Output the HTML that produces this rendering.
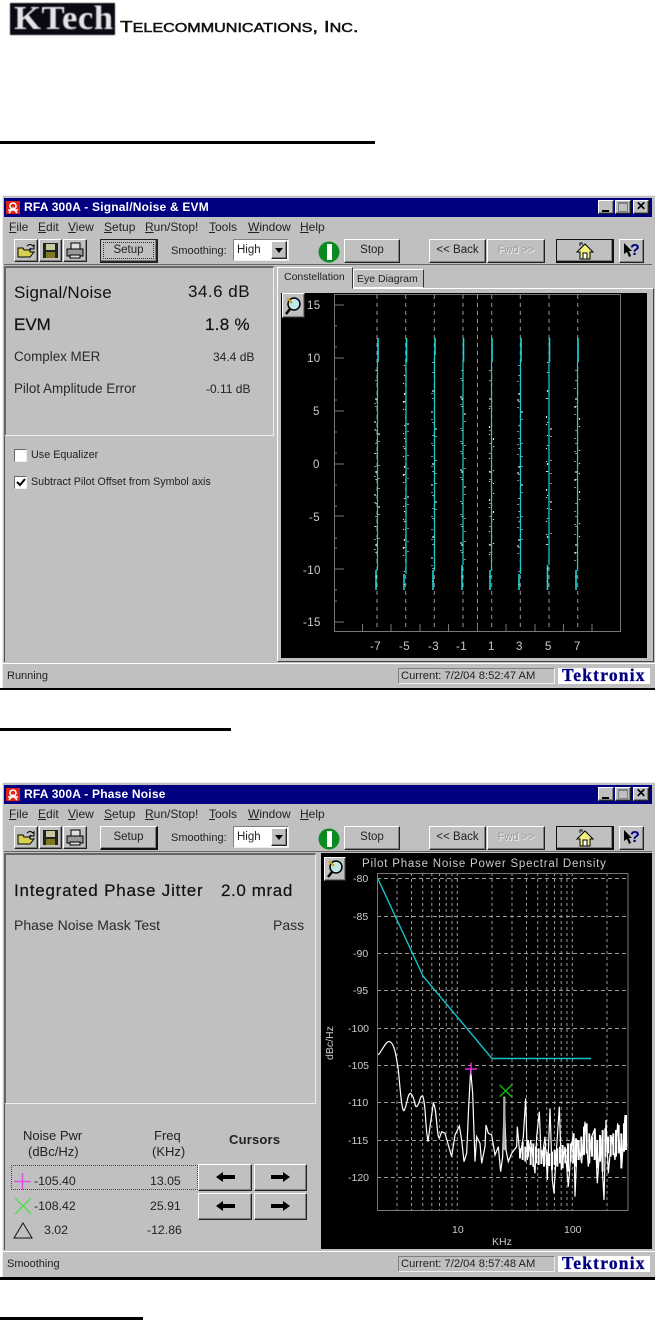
<!DOCTYPE html>
<html><head><meta charset="utf-8"><style>
html,body{margin:0;padding:0;background:#fff}
body{position:relative;width:655px;height:1320px;overflow:hidden;font-family:"Liberation Sans",sans-serif}
.a,.t,.b{position:absolute}
.t{white-space:nowrap;color:#222;font-size:11px;line-height:14px}
.b{box-sizing:border-box;background:#c0c0c0;border:1px solid;border-color:#fff #222 #222 #fff;box-shadow:inset -1px -1px 0 #808080}
.c{text-align:center;color:#222;font-size:11px;line-height:20px;white-space:nowrap}
.title{position:absolute;left:4px;width:648px;height:19px;background:#000080}
.title .t{color:#fff;font-weight:bold;font-size:12px;line-height:19px;left:20px;top:0;letter-spacing:.2px}
.u{text-decoration:underline}
.sunk{position:absolute;box-sizing:border-box;background:#c0c0c0;border:1px solid;border-color:#808080 #fff #fff #808080}
.big{font-size:17px;line-height:20px;color:#111}
.mid{font-size:13.4px;line-height:16px;color:#2a2a2a}
.tk{font:bold 17.5px/15px "Liberation Serif",serif;color:#000080;letter-spacing:1.2px;-webkit-text-stroke:.3px #000080}
svg{position:absolute;overflow:visible}
svg text{font-family:"Liberation Sans",sans-serif}
.plot{filter:blur(.3px)}
</style></head><body>

<!-- Logo -->
<div class="a" style="left:10px;top:3px;width:105px;height:32px;background:#0a0a14;overflow:hidden;filter:blur(.4px)">
<div class="t" style="left:4px;top:1px;font:bold 34px/30px 'Liberation Serif',serif;color:#e4e4e8;letter-spacing:.5px;transform-origin:0 0;transform:scaleX(1.02)">KTech</div></div>
<div class="t" style="left:120px;top:20px;font-size:16px;line-height:16px;color:#111;-webkit-text-stroke:.45px #111;transform-origin:0 0;transform:scaleX(1.29);filter:blur(.3px)">T<span style="font-size:12.5px">ELECOMMUNICATIONS</span>, I<span style="font-size:12.5px">NC</span>.</div>

<div class="a" style="left:0;top:141px;width:375px;height:3px;background:#000"></div>

<!-- WINDOW 1 -->
<div class="a" style="left:0;top:195px;width:655px;height:495px;filter:blur(.25px)">
<div class="a" style="left:2px;top:0;width:653px;height:493px;background:#c0c0c0;border-top:1px solid #eee;border-left:1px solid #eee;box-sizing:border-box"></div>
<div class="a" style="left:0;top:493px;width:655px;height:2px;background:#000"></div>
<div class="title" style="top:3px"><div class="a" style="left:2px;top:3px;width:14px;height:13px;background:#e02010"><svg width="14" height="13"><path d="M7 2a3 3 0 1 1-.01 0M3 12l4-5 4 5M2 9h10" fill="none" stroke="#fff" stroke-width="1.500"/></svg></div><div class="t">RFA 300A - Signal/Noise &amp; EVM</div></div>
<div class="b" style="left:598px;top:5px;width:16px;height:14px"><div class="a" style="left:3px;top:9px;width:7px;height:2px;background:#000"></div></div>
<div class="b" style="left:615px;top:5px;width:16px;height:14px"><div class="a" style="left:2px;top:1px;width:10px;height:10px;box-sizing:border-box;border:1px solid #808080;border-top-width:2px"></div></div>
<div class="b" style="left:633px;top:5px;width:16px;height:14px"><div class="c" style="line-height:11px;font-weight:bold;font-size:12px;color:#000">✕</div></div>
<div class="t" style="left:9px;top:25px;font-size:12px"><span class="u">F</span>ile</div>
<div class="t" style="left:38px;top:25px;font-size:12px"><span class="u">E</span>dit</div>
<div class="t" style="left:68px;top:25px;font-size:12px"><span class="u">V</span>iew</div>
<div class="t" style="left:104px;top:25px;font-size:12px"><span class="u">S</span>etup</div>
<div class="t" style="left:145px;top:25px;font-size:12px"><span class="u">R</span>un/Stop!</div>
<div class="t" style="left:209px;top:25px;font-size:12px"><span class="u">T</span>ools</div>
<div class="t" style="left:248px;top:25px;font-size:12px"><span class="u">W</span>indow</div>
<div class="t" style="left:300px;top:25px;font-size:12px"><span class="u">H</span>elp</div>
<div class="b" style="left:14px;top:44px;width:24px;height:23px"><svg width="22" height="21" viewBox="0 0 22 21"><path d="M3 17V8h5l1 2h6v2h4l-4 5H3z" fill="#d8d050" stroke="#000"/><path d="M12 6q3-3 6 0l1-1v4h-4l1-1" fill="none" stroke="#000"/></svg></div>
<div class="b" style="left:39px;top:44px;width:23px;height:23px"><svg width="21" height="21" viewBox="0 0 21 21"><rect x="3" y="3" width="15" height="15" fill="#222"/><rect x="6" y="4" width="9" height="6" fill="#c8c8a0"/><rect x="6" y="12" width="9" height="6" fill="#807820"/></svg></div>
<div class="b" style="left:63px;top:44px;width:24px;height:23px"><svg width="22" height="21" viewBox="0 0 22 21"><path d="M7 3h9v6H7z" fill="#ddd" stroke="#000"/><path d="M3 9h16v7H3z" fill="#999" stroke="#000"/><path d="M6 15h10v3H6z" fill="#ddd" stroke="#000"/></svg></div>
<div class="b" style="left:100px;top:44px;width:58px;height:24px;border-color:#222;border-width:1px 2px 2px 1px"><div class="a" style="left:2px;top:2px;right:2px;bottom:2px;border:1px dotted #333"></div><div class="c" style="line-height:20px;font-size:11.5px">Setup</div></div>
<div class="t" style="left:171px;top:49px">Smoothing:</div>
<div class="a" style="left:233px;top:44px;width:56px;height:22px;background:#fff;border:1px solid;border-color:#808080 #eee #eee #808080;box-sizing:border-box"><div class="t" style="left:3px;top:3px;font-size:11.5px">High</div><div class="b" style="right:1px;top:1px;width:16px;height:18px"><svg width="14" height="16"><path d="M3 6h8l-4 5z" fill="#000"/></svg></div></div>
<svg style="left:318px;top:46px" width="23" height="23"><circle cx="11" cy="11" r="10.500" fill="#0a8a20"/><rect x="9" y="3" width="5" height="16" fill="#fff"/></svg>
<div class="b" style="left:344px;top:44px;width:56px;height:24px"><div class="c" style="font-size:11.5px">Stop</div></div>
<div class="b" style="left:429px;top:44px;width:57px;height:24px"><div class="c" style="font-size:11.5px">&lt;&lt; Back</div></div>
<div class="b" style="left:487px;top:44px;width:58px;height:24px"><div class="c" style="color:#999;text-shadow:1px 1px 0 #eee">Fwd &gt;&gt;</div></div>
<div class="b" style="left:556px;top:44px;width:58px;height:24px;border-color:#111;border-width:1px 2px 2px 1px"><svg style="left:18px;top:1px" width="20" height="20"><path d="M2 11L10 3l8 8h-3v7H5v-7z" fill="#f4f080" stroke="#000"/><path d="M5 5V2h2v2" fill="#fff" stroke="#000"/><rect x="8" y="12" width="4" height="6" fill="#fff" stroke="#000"/></svg></div>
<div class="b" style="left:619px;top:44px;width:25px;height:24px"><svg width="23" height="22"><path d="M4 3l8 8h-3l2 5-2 1-2-5-3 2z" fill="#000"/><text x="10" y="15" font-size="16" font-weight="bold" fill="#000080">?</text></svg></div>
<div class="a" style="left:4px;top:69px;width:648px;height:1px;background:#666"></div>

<div class="a" style="left:4px;top:71px;width:1px;height:396px;background:#555"></div>
<div class="sunk" style="left:4px;top:71px;width:270px;height:170px;border-color:#666 #eee #eee #666;border-width:2px 1px 1px 2px"></div>
<div class="t big" style="left:14px;top:88px;letter-spacing:.2px">Signal/Noise</div>
<div class="t big" style="left:188px;top:87px;letter-spacing:.5px">34.6 dB</div>
<div class="t big" style="left:14px;top:120px;-webkit-text-stroke:.2px #111">EVM</div>
<div class="t big" style="left:205px;top:120px;letter-spacing:.3px;-webkit-text-stroke:.2px #111">1.8 %</div>
<div class="t mid" style="left:14px;top:154px">Complex MER</div>
<div class="t" style="left:213px;top:155px;font-size:12px">34.4 dB</div>
<div class="t mid" style="left:14px;top:186px">Pilot Amplitude Error</div>
<div class="t" style="left:206px;top:187px;font-size:12px">-0.11 dB</div>
<div class="a" style="left:14px;top:254px;width:11px;height:11px;background:#fff;border:1px solid;border-color:#666 #eee #eee #666"></div>
<div class="t" style="left:31px;top:253px;font-size:10.8px">Use Equalizer</div>
<div class="a" style="left:14px;top:281px;width:11px;height:11px;background:#fff;border:1px solid;border-color:#666 #eee #eee #666"><svg width="11" height="11"><path d="M2 5l3 3 5-6" fill="none" stroke="#000" stroke-width="2"/></svg></div>
<div class="t" style="left:31px;top:280px;font-size:10.7px">Subtract Pilot Offset from Symbol axis</div>

<!-- tabs -->
<div class="a" style="left:277px;top:93px;width:377px;height:374px;border:1px solid;border-color:#fff #444 #444 #fff;box-sizing:border-box"></div>
<div class="a" style="left:277px;top:72px;width:76px;height:22px;background:#c0c0c0;border:1px solid;border-color:#fff #333 #c0c0c0 #fff;box-sizing:border-box"><div class="t" style="left:6px;top:2px;font-size:10.5px">Constellation</div></div>
<div class="a" style="left:353px;top:74px;width:71px;height:19px;background:#c0c0c0;border:1px solid;border-color:#fff #333 #fff #fff;box-sizing:border-box"><div class="t" style="left:3px;top:2px;font-size:10.5px">Eye Diagram</div></div>
</div>

<!-- plot 1 -->
<svg class="plot" style="left:0;top:0" width="655" height="1320" viewBox="0 0 655 1320">
<rect x="281" y="293" width="366" height="365" fill="#000"/>
<g stroke="#999" stroke-dasharray="4 4" fill="none">
<path d="M377 295V631M405.700 295V631M434.300 295V631M463 295V631M477.500 295V631M491.700 295V631M520.300 295V631M549 295V631M577.700 295V631"/>
</g>
<path d="M334 294.500H620.500V631.500H334.500V294.500M334 305h10M334 358h10M334 569h10M334 622h10M334 411h10M334 464h10M334 516h10M334 326h3M334 347h3M334 379h3M334 400h3M334 432h3M334 453h3M334 485h3M334 506h3M334 538h3M334 548h3M334 590h3M334 601h3M362.500 631v-7M391 631v-7M420 631v-7M448.500 631v-7M477.500 631v-7M506 631v-7M535 631v-7M563.500 631v-7M592 631v-7" stroke="#777" fill="none"/>
<g stroke="#18d8d8" stroke-width="1.600" fill="none">
<path d="M378 338V362"/><path d="M406.500 338V362"/><path d="M435 338V355"/><path d="M463.500 338V362"/><path d="M492 338V362"/><path d="M521 338V362"/><path d="M549.500 338V362"/><path d="M578 338V362"/>
<path d="M376 570V590"/><path d="M404 574V590"/><path d="M433 570V590"/><path d="M462 565V590"/><path d="M490 570V590"/><path d="M519 574V590"/><path d="M547.500 565V590"/><path d="M576 570V590"/>
</g>
<g stroke="#18d0d0" stroke-width="1.200" fill="none">
<path d="M377.500 362V570M406 362V574M434.500 355V570M463 362V565M491.500 362V570M520.500 362V574M549 362V565M577.500 362V570"/>
</g>
<g stroke="#ddd" stroke-width="1.200" fill="none" stroke-dasharray="1 9 1 17 2 6 1 23 1 12">
<path d="M376 370V585M404.500 365V585M433 362V585M462 370V585M490 370V585M519 365V585M547.500 362V585M576 370V585"/>
<path d="M375 400V560M403.500 380V565M432 390V570M461 375V560M489.500 405V565M518 378V570M546.500 395V560M575 385V565" stroke-dashoffset="7"/>
<path d="M379 420V540M408 410V555M436 415V530M465 400V560M493.500 425V545M522 398V550M551 415V540M579.500 405V545" stroke-dashoffset="15"/>
</g>
<g font-size="11.500" fill="#ccc" letter-spacing=".4">
<text x="307" y="309">15</text><text x="307" y="362">10</text><text x="313" y="415">5</text><text x="313" y="468">0</text><text x="309" y="521">-5</text><text x="303" y="574">-10</text><text x="303" y="626">-15</text>
<text x="370" y="650">-7</text><text x="399" y="650">-5</text><text x="428" y="650">-3</text><text x="456" y="650">-1</text><text x="488" y="650">1</text><text x="516" y="650">3</text><text x="545" y="650">5</text><text x="574" y="650">7</text>
</g>
</svg>
<div class="b" style="left:282px;top:293px;width:23px;height:25px"><svg width="21" height="23"><circle cx="11" cy="10" r="6" fill="#bfe8ea" stroke="#000" stroke-width="1.500"/><path d="M7 15l-4 5" stroke="#000" stroke-width="2.500"/><path d="M4 4l5 5" stroke="#c8a020" stroke-width="2"/></svg></div>

<!-- status 1 -->
<div class="a" style="left:2px;top:663px;width:653px;height:1px;background:#fff"></div>
<div class="t" style="left:7px;top:669px;font-size:11px">Running</div>
<div class="a" style="left:398px;top:668px;width:157px;height:16px;border:1px solid;border-color:#808080 #eee #eee #808080;box-sizing:border-box"><div class="t" style="left:2px;top:0;font-size:11.2px">Current: 7/2/04 8:52:47 AM</div></div>
<div class="a" style="left:558px;top:668px;width:92px;height:16px;background:#fff"><div class="t tk" style="left:4px;top:0">Tektronix</div></div>

<div class="a" style="left:0;top:728px;width:231px;height:3px;background:#000"></div>

<!-- WINDOW 2 -->
<div class="a" style="left:0;top:782px;width:655px;height:498px;filter:blur(.25px)">
<div class="a" style="left:2px;top:0;width:653px;height:495px;background:#c0c0c0;border-top:1px solid #eee;border-left:1px solid #eee;box-sizing:border-box"></div>
<div class="a" style="left:0;top:495px;width:655px;height:3px;background:#000"></div>
<div class="title" style="top:3px"><div class="a" style="left:2px;top:3px;width:14px;height:13px;background:#e02010"><svg width="14" height="13"><path d="M7 2a3 3 0 1 1-.01 0M3 12l4-5 4 5M2 9h10" fill="none" stroke="#fff" stroke-width="1.500"/></svg></div><div class="t">RFA 300A - Phase Noise</div></div>
<div class="b" style="left:598px;top:5px;width:16px;height:14px"><div class="a" style="left:3px;top:9px;width:7px;height:2px;background:#000"></div></div>
<div class="b" style="left:615px;top:5px;width:16px;height:14px"><div class="a" style="left:2px;top:1px;width:10px;height:10px;box-sizing:border-box;border:1px solid #808080;border-top-width:2px"></div></div>
<div class="b" style="left:633px;top:5px;width:16px;height:14px"><div class="c" style="line-height:11px;font-weight:bold;font-size:12px;color:#000">✕</div></div>
<div class="t" style="left:9px;top:25px;font-size:12px"><span class="u">F</span>ile</div>
<div class="t" style="left:38px;top:25px;font-size:12px"><span class="u">E</span>dit</div>
<div class="t" style="left:68px;top:25px;font-size:12px"><span class="u">V</span>iew</div>
<div class="t" style="left:104px;top:25px;font-size:12px"><span class="u">S</span>etup</div>
<div class="t" style="left:145px;top:25px;font-size:12px"><span class="u">R</span>un/Stop!</div>
<div class="t" style="left:209px;top:25px;font-size:12px"><span class="u">T</span>ools</div>
<div class="t" style="left:248px;top:25px;font-size:12px"><span class="u">W</span>indow</div>
<div class="t" style="left:300px;top:25px;font-size:12px"><span class="u">H</span>elp</div>
<div class="b" style="left:14px;top:44px;width:24px;height:23px"><svg width="22" height="21" viewBox="0 0 22 21"><path d="M3 17V8h5l1 2h6v2h4l-4 5H3z" fill="#d8d050" stroke="#000"/><path d="M12 6q3-3 6 0l1-1v4h-4l1-1" fill="none" stroke="#000"/></svg></div>
<div class="b" style="left:39px;top:44px;width:23px;height:23px"><svg width="21" height="21" viewBox="0 0 21 21"><rect x="3" y="3" width="15" height="15" fill="#222"/><rect x="6" y="4" width="9" height="6" fill="#c8c8a0"/><rect x="6" y="12" width="9" height="6" fill="#807820"/></svg></div>
<div class="b" style="left:63px;top:44px;width:24px;height:23px"><svg width="22" height="21" viewBox="0 0 22 21"><path d="M7 3h9v6H7z" fill="#ddd" stroke="#000"/><path d="M3 9h16v7H3z" fill="#999" stroke="#000"/><path d="M6 15h10v3H6z" fill="#ddd" stroke="#000"/></svg></div>
<div class="b" style="left:100px;top:44px;width:58px;height:24px;border-color:#fff #111 #111 #fff;border-width:1px 2px 2px 1px"><div class="c" style="font-size:11.5px">Setup</div></div>
<div class="t" style="left:171px;top:49px">Smoothing:</div>
<div class="a" style="left:233px;top:44px;width:56px;height:22px;background:#fff;border:1px solid;border-color:#808080 #eee #eee #808080;box-sizing:border-box"><div class="t" style="left:3px;top:3px;font-size:11.500px">High</div><div class="b" style="right:1px;top:1px;width:16px;height:18px"><svg width="14" height="16"><path d="M3 6h8l-4 5z" fill="#000"/></svg></div></div>
<svg style="left:318px;top:46px" width="23" height="23"><circle cx="11" cy="11" r="10.500" fill="#0a8a20"/><rect x="9" y="3" width="5" height="16" fill="#fff"/></svg>
<div class="b" style="left:344px;top:44px;width:56px;height:24px"><div class="c" style="font-size:11.5px">Stop</div></div>
<div class="b" style="left:429px;top:44px;width:57px;height:24px"><div class="c" style="font-size:11.5px">&lt;&lt; Back</div></div>
<div class="b" style="left:487px;top:44px;width:58px;height:24px"><div class="c" style="color:#999;text-shadow:1px 1px 0 #eee">Fwd &gt;&gt;</div></div>
<div class="b" style="left:556px;top:44px;width:58px;height:24px;border-color:#111;border-width:1px 2px 2px 1px"><svg style="left:18px;top:1px" width="20" height="20"><path d="M2 11L10 3l8 8h-3v7H5v-7z" fill="#f4f080" stroke="#000"/><path d="M5 5V2h2v2" fill="#fff" stroke="#000"/><rect x="8" y="12" width="4" height="6" fill="#fff" stroke="#000"/></svg></div>
<div class="b" style="left:619px;top:44px;width:25px;height:24px"><svg width="23" height="22"><path d="M4 3l8 8h-3l2 5-2 1-2-5-3 2z" fill="#000"/><text x="10" y="15" font-size="16" font-weight="bold" fill="#000080">?</text></svg></div>
<div class="a" style="left:4px;top:69px;width:648px;height:1px;background:#666"></div>

<div class="a" style="left:4px;top:71px;width:1px;height:397px;background:#555"></div>
<div class="sunk" style="left:4px;top:71px;width:312px;height:251px;border-color:#666 #eee #eee #666;border-width:2px 1px 1px 2px"></div>
<div class="t big" style="left:14px;top:99px;letter-spacing:.8px;-webkit-text-stroke:.2px #111">Integrated Phase Jitter</div>
<div class="t big" style="left:221px;top:99px;letter-spacing:.6px;-webkit-text-stroke:.2px #111">2.0 mrad</div>
<div class="t mid" style="left:14px;top:135px;font-size:14px">Phase Noise Mask Test</div>
<div class="t mid" style="left:273px;top:135px;font-size:14px">Pass</div>

<div class="t" style="left:23px;top:347px;font-size:13px">Noise Pwr</div>
<div class="t" style="left:28px;top:363px;font-size:13px">(dBc/Hz)</div>
<div class="t" style="left:154px;top:347px;font-size:13px">Freq</div>
<div class="t" style="left:152px;top:363px;font-size:13px">(KHz)</div>
<div class="t" style="left:229px;top:351px;font-size:13px;font-weight:bold;letter-spacing:.2px">Cursors</div>
<div class="a" style="left:11px;top:383px;width:187px;height:25px;border:1px dotted #444;box-sizing:border-box"></div>
<svg style="left:0;top:0" width="340" height="480">
<path d="M14 399.500H31M22.500 391V408" stroke="#e050e0" stroke-width="1.500"/>
<path d="M15 416L31 432M31 416L15 432" stroke="#40e040" stroke-width="1.200"/>
<path d="M23 441L32 456H14Z" fill="none" stroke="#111" stroke-width="1"/>
</svg>
<div class="t" style="left:34px;top:392px;font-size:12.3px">-105.40</div>
<div class="t" style="left:150px;top:392px;font-size:12.3px">13.05</div>
<div class="t" style="left:34px;top:417px;font-size:12.3px">-108.42</div>
<div class="t" style="left:150px;top:417px;font-size:12.3px">25.91</div>
<div class="t" style="left:44px;top:441px;font-size:12.3px">3.02</div>
<div class="t" style="left:147px;top:441px;font-size:12.3px">-12.86</div>
<div class="b" style="left:198px;top:382px;width:54px;height:27px"><svg width="52" height="25"><path d="M17 12l7-5v3h12v4H24v3z" fill="#000"/></svg></div>
<div class="b" style="left:254px;top:382px;width:53px;height:27px"><svg width="51" height="25"><path d="M35 12l-7-5v3H16v4h12v3z" fill="#000"/></svg></div>
<div class="b" style="left:198px;top:411px;width:54px;height:27px"><svg width="52" height="25"><path d="M17 12l7-5v3h12v4H24v3z" fill="#000"/></svg></div>
<div class="b" style="left:254px;top:411px;width:53px;height:27px"><svg width="51" height="25"><path d="M35 12l-7-5v3H16v4h12v3z" fill="#000"/></svg></div>
<div class="a" style="left:2px;top:469px;width:653px;height:1px;background:#fff"></div>
<div class="t" style="left:7px;top:475px;font-size:11px">Smoothing</div>
<div class="a" style="left:398px;top:474px;width:157px;height:16px;border:1px solid;border-color:#808080 #eee #eee #808080;box-sizing:border-box"><div class="t" style="left:2px;top:0;font-size:11.2px">Current: 7/2/04 8:57:48 AM</div></div>
<div class="a" style="left:558px;top:474px;width:92px;height:16px;background:#fff"><div class="t tk" style="left:4px;top:0">Tektronix</div></div>
</div>

<!-- plot 2 -->
<svg class="plot" style="left:0;top:0" width="655" height="1320" viewBox="0 0 655 1320">
<rect x="321" y="853" width="331" height="396" fill="#000"/>
<g stroke="#999" stroke-dasharray="3 3" fill="none">
<path d="M397 873V1210M411.500 873V1210M422.700 873V1210M431.800 873V1210M439.500 873V1210M446.200 873V1210M452 873V1210M457.300 873V1210M492 873V1210M512 873V1210M526.500 873V1210M537.700 873V1210M546.800 873V1210M554.500 873V1210M561.200 873V1210M567 873V1210M572.300 873V1210M607 873V1210"/>
<path d="M377 878.500H628M377 916.500H628M377 953.500H628M377 990.500H628M377 1028.500H628M377 1065.500H628M377 1102.500H628M377 1140.500H628M377 1177.500H628" stroke-dasharray="4 3"/>
</g>
<path d="M377.500 873.500H628V1210.500H377.500Z" stroke="#777" fill="none"/>
<path d="M378 879L423 976L492 1058.500H591" stroke="#16c0c8" stroke-width="1.400" fill="none"/>
<g transform="translate(320,1040) scale(.33333)" fill="none">
<path d="M175 45C190 25 200 0 210 5C225 12 230 60 235 90C240 140 245 215 252 212C262 195 262 160 272 160C285 170 282 200 290 200C300 190 300 165 308 168C318 190 315 260 324 305L330 260L340 190C350 200 350 290 358 295L365 275L375 280L395 350L405 285L418 258L425 300L432 365L440 340L446 200L452 90L458 160L465 365L470 290L480 310L485 370L495 320L498 255L505 280L515 285L525 345L535 320L542 395L548 350L553 170L558 330L565 365L575 340L590 320L592 260L600 350L610 290L617 175L622 360L632 300L645 400L650 290L658 215L664 370L675 290L682 420L690 205L697 420L702 460L708 350L718 200L724 390L735 320L745 440L755 310L762 280L765 470L772 300L785 370L795 245L805 380L815 290L825 265L832 430L842 290L852 480L858 240L865 400L875 290L885 360L893 250L905 385L915 225L920 320" stroke="#fff" stroke-width="3.600"/>
<path d="M600 325V355M608 305V360M616 320V365M624 300V350M632 320V375M640 310V380M648 320V370M656 325V375M664 330V372M672 320V380M680 335V375M688 340V378M696 335V390M704 330V375M712 325V380M720 320V370M728 315V385M736 325V370M744 310V395M752 310V365M760 280V370M768 295V380M776 300V360M784 290V350M792 260V345M800 250V340M808 280V370M816 290V350M824 270V360M832 300V385M840 285V365M848 270V395M856 265V350M864 290V340M872 285V350M880 280V345M888 270V350M896 255V340M904 280V385M912 250V335M918 225V330" stroke="#fff" stroke-width="6"/>
<path d="M553 170V330" stroke="#aaa" stroke-width="7"/>
<path d="M435 87H471M453 68V104" stroke="#e030d8" stroke-width="4.500"/>
<path d="M539 135L575 170M575 135L539 170" stroke="#10b010" stroke-width="4.500"/>
</g>
<g font-size="10.500" fill="#ccc">
<text x="353" y="882">-80</text><text x="353" y="920">-85</text><text x="353" y="957">-90</text><text x="353" y="994">-95</text><text x="348" y="1032">-100</text><text x="348" y="1069">-105</text><text x="348" y="1106">-110</text><text x="348" y="1144">-115</text><text x="348" y="1181">-120</text>
<text x="452" y="1233">10</text><text x="564" y="1233">100</text><text x="492" y="1245">KHz</text>
<text transform="translate(333,1060) rotate(-90)">dBc/Hz</text>
</g>
<text x="362" y="867" font-size="11.500" fill="#ccc" letter-spacing=".78">Pilot Phase Noise Power Spectral Density</text>
</svg>
<div class="b" style="left:324px;top:857px;width:22px;height:24px"><svg width="20" height="22"><circle cx="11" cy="9" r="6" fill="#bfe8ea" stroke="#000" stroke-width="1.500"/><path d="M7 14l-4 5" stroke="#000" stroke-width="2.500"/><path d="M4 3l5 5" stroke="#c8a020" stroke-width="2"/></svg></div>

<div class="a" style="left:0;top:1317px;width:143px;height:3px;background:#000"></div>
</body></html>
